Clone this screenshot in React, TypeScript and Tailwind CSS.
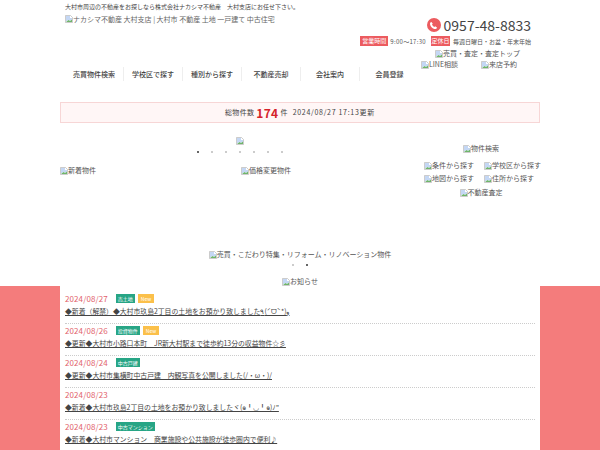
const BrokenImg = () => (
  <svg width="8" height="8" viewBox="0 0 16 16" className="inline-block shrink-0 align-[-1px]">
    <path d="M1 1h10l4 4v10H1z" fill="#fff" stroke="#a9a9a9" strokeWidth="1.2" />
    <path d="M2 2h8v4h4v3l-4 3-3-2-5 3z" fill="#c4d7f4" />
    <path d="M2 14l5-4 3 2 4-3v5z" fill="#6fb56a" />
  </svg>
);

const Alt = ({ label, className = "" }: { label: string; className?: string }) => (
  <span className={"inline-flex items-center whitespace-nowrap text-[7px] leading-[9px] text-[#555] " + className}>
    <BrokenImg />
    {label}
  </span>
);

const Dots = ({ count, active }: { count: number; active: number }) => (
  <div className="flex justify-center gap-[12px]">
    {Array.from({ length: count }).map((_, i) => (
      <span key={i} className={i === active ? "size-[2px] rounded-full bg-[#333]" : "size-[2px] rounded-full bg-[#bbb]"} />
    ))}
  </div>
);

const nav = ["売買物件検索", "学校区で探す", "種別から探す", "不動産売却", "会社案内", "会員登録"];

const news = [
  { date: "2024/08/27", tag: "売土地", isNew: true, text: "◆新着（解禁）◆大村市玖島2丁目の土地をお預かり致しました٩(ˊᗜˋ*)و" },
  { date: "2024/08/26", tag: "投資物件", isNew: true, text: "◆更新◆大村市小路口本町　JR新大村駅まで徒歩約13分の収益物件☆彡" },
  { date: "2024/08/24", tag: "中古戸建", isNew: false, text: "◆更新◆大村市集横町中古戸建　内観写真を公開しました(/・ω・)/" },
  { date: "2024/08/23", tag: "", isNew: false, text: "◆新着◆大村市玖島2丁目の土地をお預かり致しましたヾ(๑╹◡╹๑)ﾉ”" },
  { date: "2024/08/23", tag: "中古マンション", isNew: false, text: "◆新着◆大村市マンション　商業施設や公共施設が徒歩圏内で便利♪" },
];

export default function App() {
  return (
    <div className="h-[450px] w-[600px] overflow-hidden bg-white font-['Noto_Sans_CJK_JP',sans-serif] text-[#333]">
      <header className="mx-auto flex h-[102px] w-[480px] items-start justify-between">
        <div className="w-[300px] pl-[5px] pt-[3px]">
          <p className="whitespace-nowrap text-[6px] leading-[8px] text-[#444]">大村市周辺の不動産をお探しなら株式会社ナカシマ不動産　大村支店にお任せ下さい。</p>
          <div className="mt-[3px] flex items-center whitespace-nowrap text-[7px] leading-[10px] text-[#666]">
            <BrokenImg />
            ナカシマ不動産 大村支店 | 大村市 不動産 土地 一戸建て 中古住宅
          </div>
          <nav className="mt-[43px] flex w-[354px]">
            {nav.map((item, i) => (
              <div key={item} className={"flex h-[14px] w-[59px] shrink-0 items-center justify-center text-[7px] font-medium text-[#444] " + (i < 5 ? "border-r border-[#eee]" : "")}>
                {item}
              </div>
            ))}
          </nav>
        </div>
        <div className="flex w-[180px] flex-col items-end pr-[9px] pt-[17px]">
          <div className="flex h-[16px] items-center gap-[2px]">
            <span className="mr-px flex size-[14px] items-center justify-center rounded-full bg-[#ec5b5f]">
              <svg width="9" height="9" viewBox="0 0 24 24" fill="#fff">
                <path d="M6.6 2.5 10 7.2 8 9.6c.9 2.400 3.400 5 6.200 6.400l2.200-2.100 4.900 3.300c-.5 2.600-2.500 4.300-4.700 4.300C9.600 21.500 2.500 13.600 2.700 6.500c.1-2 1.700-3.700 3.900-4z" />
              </svg>
            </span>
            <span className="text-[14px] leading-[16px] text-[#444]">0957-48-8833</span>
          </div>
          <div className="mt-[3px] flex h-[10px] items-center whitespace-nowrap text-[6px] text-[#555]">
            <span className="mr-[2px] bg-[#ec5b5f] px-[2px] leading-[10px] text-white">営業時間</span>
            <span className="tracking-[0.3px]">9:00～17:30</span>
            <span className="ml-[5px] mr-[3px] bg-[#ec5b5f] px-[0.5px] leading-[10px] text-white">定休日</span>
            毎週日曜日・お盆・年末年始
          </div>
          <div className="mt-[3px] flex w-full justify-end pr-[11px]">
            <Alt label="売買・査定・査定トップ" />
          </div>
          <div className="mt-[2px] flex w-full gap-[23px] pl-[61px]">
            <Alt label="LINE相談" />
            <Alt label="来店予約" />
          </div>
        </div>
      </header>

      <div className="mx-auto flex h-[21px] w-[480px] items-center justify-center border border-[#f7d6d6] bg-[#fff6f6] text-[7px] tracking-[0.3px] text-[#444]">
        総物件数
        <span className="mx-[2px] text-[12px] font-bold leading-[13px] text-[#d5232b]">174</span>
        件
        <span className="ml-[5px] tracking-[0.7px]">2024/08/27 17:13更新</span>
      </div>

      <main className="mx-auto flex h-[118px] w-[480px]">
        <div className="w-[360px] pt-[14px]">
          <div className="flex h-[10px] justify-center">
            <BrokenImg />
          </div>
          <div className="mt-[4px]">
            <Dots count={7} active={0} />
          </div>
          <div className="mt-[13px] flex">
            <div className="flex w-[181px]">
              <Alt label="新着物件" />
            </div>
            <Alt label="価格変更物件" />
          </div>
        </div>
        <div className="flex w-[120px] flex-col items-center pl-[2px] pt-[21px]">
          <Alt label="物件検索" />
          <div className="mt-[8px] grid w-[120px] grid-cols-[60px_60px] gap-y-[4px] pl-[3px]">
            <Alt label="条件から探す" />
            <Alt label="学校区から探す" />
            <Alt label="地図から探す" />
            <Alt label="住所から探す" />
          </div>
          <Alt label="不動産査定" className="mt-[5px]" />
        </div>
      </main>

      <section className="flex h-[45px] flex-col items-center pt-[9px]">
        <Alt label="売買・こだわり特集・リフォーム・リノベーション物件" />
        <div className="mt-[5px]">
          <Dots count={2} active={1} />
        </div>
        <Alt label="お知らせ" className="mt-[11px]" />
      </section>

      <section className="h-[164px] bg-[#f47c7c]">
        <ul className="mx-auto h-full w-[480px] bg-white px-[5px] pt-[6px]">
          {news.map((n, i) => (
            <li key={i} className="h-[32px] border-b border-dotted border-[#ccc]">
              <div className="flex h-[13px] items-center gap-[8px]">
                <span className="text-[8px] leading-[14px] tracking-[0.1px] text-[#e2626b]">{n.date}</span>
                <div className="flex gap-[3px]">
                  {n.tag && <span className="bg-[#27a585] px-[2px] text-[5px] leading-[9px] text-white">{n.tag}</span>}
                  {n.isNew && <span className="bg-[#fbc04a] px-[3px] text-[5px] leading-[9px] text-white">New</span>}
                </div>
              </div>
              <a className="block whitespace-nowrap text-[6.85px] leading-[12px] text-[#444] underline">{n.text}</a>
            </li>
          ))}
        </ul>
      </section>
    </div>
  );
}
